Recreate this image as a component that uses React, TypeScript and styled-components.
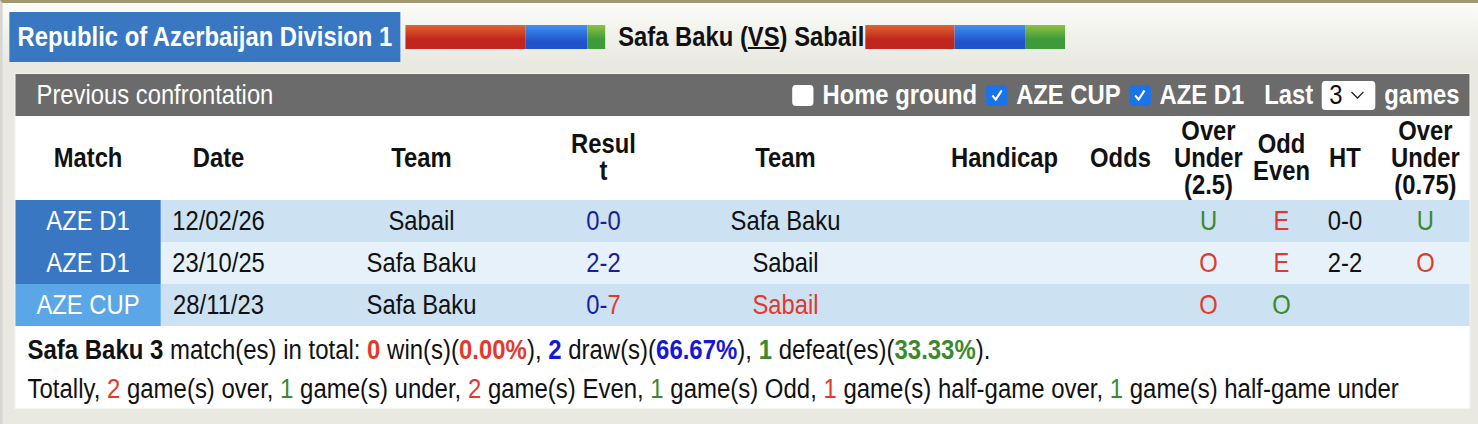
import React from 'react'
import styled, { createGlobalStyle } from 'styled-components'

// The page in the reference is Arial squeezed to 85% width;
// the layout is written at full width and narrowed once on the frame.
const SQUEEZE = 0.85
const x = (px: number) => +(px / SQUEEZE).toFixed(2)

const GlobalStyle = createGlobalStyle`
    html, body {
        margin: 0;
        padding: 0;
        background: #e9e9e2;
        overflow: hidden;
    }
    body {
        font-family: "Liberation Sans", Arial, sans-serif;
    }
`

const Viewport = styled.div`
    width: 1478px;
    height: 424px;
    overflow: hidden;
`

const Page = styled.div`
    width: ${x(1478)}px;
    height: 424px;
    box-sizing: border-box;
    transform: scaleX(${SQUEEZE});
    transform-origin: 0 0;
    border-top: 3px solid #a09873;
    border-left: ${x(3)}px solid #d6d6d2;
    background: linear-gradient(#fbfbf8, #e9e9e2 60px);
    padding: 9px 0 0 ${x(7)}px;
`

const TopRow = styled.div`
    display: flex;
    align-items: center;
`

const LeagueBox = styled.div`
    height: 50px;
    display: flex;
    align-items: center;
    padding: 0 ${x(8)}px;
    background: #3a77c2;
    color: #fff;
    font-weight: bold;
    font-size: 28px;
`

const Bars = styled.div<{ gap: number }>`
    display: flex;
    height: 24px;
    margin-left: ${p => x(p.gap)}px;
`

const Bar = styled.div<{ w: number, kind: 'red' | 'blue' | 'green' }>`
    width: ${p => x(p.w)}px;
    background: ${p => p.kind === 'red'
        ? 'linear-gradient(#e2642f, #c0261d 60%)'
        : p.kind === 'blue'
            ? 'linear-gradient(#3e92f2, #2152cb 70%)'
            : 'linear-gradient(#8fc23f, #3f9a3c 60%)'};
`

const Versus = styled.div`
    margin-left: ${x(13)}px;
    font-weight: bold;
    font-size: 28px;
    color: #111;
    u { text-decoration-thickness: 2px; }
`

const Panel = styled.div`
    margin: 12px 0 0 ${x(6)}px;
    width: ${x(1454)}px;
    outline: 1px solid #f4f4f0;
`

const PanelHead = styled.div`
    height: 42px;
    background: #6b6b6b;
    color: #fff;
    display: flex;
    align-items: center;
    justify-content: space-between;
    padding: 0 ${x(10)}px 0 ${x(21)}px;
    font-size: 28px;
`

const Controls = styled.div`
    display: flex;
    align-items: center;
    font-weight: bold;
    white-space: nowrap;
`

const Check = styled.span<{ on?: boolean }>`
    flex: 0 0 ${x(21)}px;
    width: ${x(21)}px;
    height: 21px;
    border-radius: 4px;
    background: ${p => p.on ? '#1b73e8' : '#fff'};
    display: inline-flex;
    align-items: center;
    justify-content: center;
    margin: 0 ${x(9)}px;
`

const Last = styled.span`
    margin-left: ${x(20)}px;
`

const Select = styled.span`
    flex: 0 0 ${x(53)}px;
    width: ${x(53)}px;
    height: 29px;
    box-sizing: border-box;
    border-radius: 4px;
    background: #fff;
    color: #111;
    font-weight: normal;
    display: inline-flex;
    align-items: center;
    padding-left: ${x(7)}px;
    gap: ${x(7)}px;
    margin: 0 ${x(9)}px;
`

const cols = [145, 116, 290, 74, 290, 148, 84, 92, 54, 73, 88].map(w => `${x(w)}px`).join(' ')

const HeadRow = styled.div`
    display: grid;
    grid-template-columns: ${cols};
    height: 84px;
    box-sizing: border-box;
    padding-bottom: 2px;
    background: #fff;
    font-weight: bold;
    font-size: 28px;
    line-height: 27px;
    color: #111;
`

const HeadCell = styled.div`
    display: flex;
    align-items: center;
    justify-content: center;
    text-align: center;
    padding: 0 4px;
    word-break: break-all;
`

const WrapCell = styled(HeadCell)`
    word-break: normal;
    padding: 0;
`

const Row = styled.div<{ light?: boolean }>`
    display: grid;
    grid-template-columns: ${cols};
    height: 42px;
    background: ${p => p.light ? '#e6f1f9' : '#cce1f2'};
    font-size: 28px;
    color: #111;
`

const Cell = styled.div<{ color?: string }>`
    display: flex;
    align-items: center;
    justify-content: center;
    color: ${p => p.color || 'inherit'};
`

const MatchCell = styled(Cell)<{ cup?: boolean }>`
    background: ${p => p.cup ? '#5aa6e6' : '#3a77c2'};
    color: #fff;
`

const Summary = styled.div`
    background: #fff;
    height: 82px;
    box-sizing: border-box;
    padding: 4px ${x(12)}px 0;
    font-size: 28.2px;
    line-height: 39px;
    color: #111;
    white-space: nowrap;
`

const C = styled.span<{ c: 'red' | 'blue' | 'green', b?: boolean }>`
    color: ${p => p.c === 'red' ? '#e5382c' : p.c === 'blue' ? '#1616d8' : '#3a8a2e'};
    font-weight: ${p => p.b ? 'bold' : 'normal'};
`

const RED = '#e03a2e'
const GREEN = '#3a8a2e'
const NAVY = '#1c1ca0'

const CheckMark = () => (
    <svg width="18" height="16" viewBox="0 0 18 16">
        <polyline points="3.5,8.5 7.5,12.5 14.5,3.5" fill="none" stroke="#fff" strokeWidth="2.4" />
    </svg>
)

const Chevron = () => (
    <svg width="18" height="10" viewBox="0 0 18 10">
        <polyline points="2,2 9,8 16,2" fill="none" stroke="#222" strokeWidth="1.6" />
    </svg>
)

type Game = {
    league: string,
    cup?: boolean,
    date: string,
    home: string,
    away: string,
    awayColor?: string,
    score: React.ReactNode,
    ou: [string, string],
    oe: [string, string],
    ht: string,
    ou2?: [string, string]
}

const games: Game[] = [
    { league: 'AZE D1', date: '12/02/26', home: 'Sabail', away: 'Safa Baku', score: '0-0', ou: ['U', GREEN], oe: ['E', RED], ht: '0-0', ou2: ['U', GREEN] },
    { league: 'AZE D1', date: '23/10/25', home: 'Safa Baku', away: 'Sabail', score: '2-2', ou: ['O', RED], oe: ['E', RED], ht: '2-2', ou2: ['O', RED] },
    { league: 'AZE CUP', cup: true, date: '28/11/23', home: 'Safa Baku', away: 'Sabail', awayColor: RED, score: <>0-<span style={{ color: RED }}>7</span></>, ou: ['O', RED], oe: ['O', GREEN], ht: '' },
]

const App = () => {
    return (
        <Viewport>
            <GlobalStyle />
            <Page>
                <TopRow>
                    <LeagueBox>Republic of Azerbaijan Division 1</LeagueBox>
                    <Bars gap={5}>
                        <Bar w={120} kind="red" />
                        <Bar w={62} kind="blue" />
                        <Bar w={18} kind="green" />
                    </Bars>
                    <Versus>Safa Baku (<u>VS</u>) Sabail</Versus>
                    <Bars gap={1}>
                        <Bar w={89} kind="red" />
                        <Bar w={71} kind="blue" />
                        <Bar w={40} kind="green" />
                    </Bars>
                </TopRow>
                <Panel>
                    <PanelHead>
                        <span>Previous confrontation</span>
                        <Controls>
                            <Check />Home ground
                            <Check on><CheckMark /></Check>AZE CUP
                            <Check on><CheckMark /></Check>AZE D1
                            <Last>Last</Last>
                            <Select>3<Chevron /></Select>
                            games
                        </Controls>
                    </PanelHead>
                    <HeadRow>
                        <HeadCell>Match</HeadCell>
                        <HeadCell>Date</HeadCell>
                        <HeadCell>Team</HeadCell>
                        <HeadCell>Result</HeadCell>
                        <HeadCell>Team</HeadCell>
                        <HeadCell>Handicap</HeadCell>
                        <HeadCell>Odds</HeadCell>
                        <WrapCell>Over Under (2.5)</WrapCell>
                        <WrapCell>Odd Even</WrapCell>
                        <HeadCell>HT</HeadCell>
                        <WrapCell>Over Under (0.75)</WrapCell>
                    </HeadRow>
                    {games.map((g, i) => (
                        <Row key={i} light={i === 1}>
                            <MatchCell cup={g.cup}>{g.league}</MatchCell>
                            <Cell>{g.date}</Cell>
                            <Cell>{g.home}</Cell>
                            <Cell color={NAVY}>{g.score}</Cell>
                            <Cell color={g.awayColor}>{g.away}</Cell>
                            <Cell />
                            <Cell />
                            <Cell color={g.ou[1]}>{g.ou[0]}</Cell>
                            <Cell color={g.oe[1]}>{g.oe[0]}</Cell>
                            <Cell>{g.ht}</Cell>
                            <Cell color={g.ou2?.[1]}>{g.ou2?.[0]}</Cell>
                        </Row>
                    ))}
                    <Summary>
                        <div>
                            <b>Safa Baku 3</b> match(es) in total: <C c="red" b>0</C> win(s)(<C c="red" b>0.00%</C>), <C c="blue" b>2</C> draw(s)(<C c="blue" b>66.67%</C>), <C c="green" b>1</C> defeat(es)(<C c="green" b>33.33%</C>).
                        </div>
                        <div>
                            Totally, <C c="red">2</C> game(s) over, <C c="green">1</C> game(s) under, <C c="red">2</C> game(s) Even, <C c="green">1</C> game(s) Odd, <C c="red">1</C> game(s) half-game over, <C c="green">1</C> game(s) half-game under
                        </div>
                    </Summary>
                </Panel>
            </Page>
        </Viewport>
    )
}

export default App
